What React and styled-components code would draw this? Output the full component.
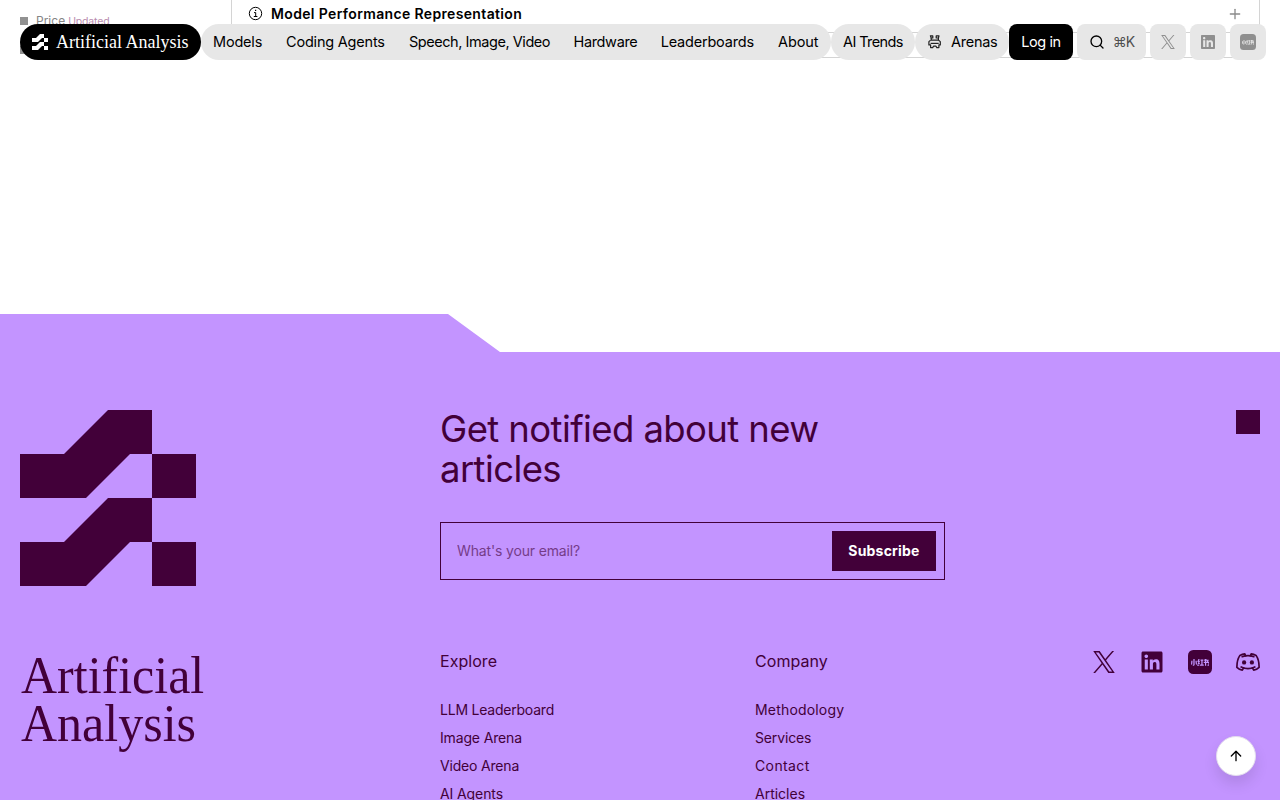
import React from 'react'
import styled, { createGlobalStyle } from 'styled-components'
import { FaLinkedin } from 'react-icons/fa'
import { SiXiaohongshu } from 'react-icons/si'
import { FiSearch, FiArrowUp, FiPlus } from 'react-icons/fi'

const INK = '#420039'
const LILAC = '#c394ff'

const GlobalStyle = createGlobalStyle`
  *, *::before, *::after {
    box-sizing: border-box;
  }
  html, body {
    margin: 0;
    overflow: hidden;
  }
  body {
    background: #fff;
    color: #000;
    font-family: Inter, "Liberation Sans", sans-serif;
    font-size: 15px;
  }
  svg {
    display: block;
    flex: none;
  }
`

const Page = styled.div`
  position: relative;
  height: 800px;
  overflow: hidden;
  display: flex;
  flex-direction: column;
`

const Content = styled.main`
  display: flex;
  flex: none;
  height: 314px;
  padding: 0 20px;
`

const Contents = styled.aside`
  width: 211px;
  padding-top: 12px;
`

const ContentsItem = styled.div`
  display: flex;
  align-items: center;
  height: 18px;
  margin-bottom: 11px;
  font-size: 12px;
  line-height: 16px;
  color: #858585;
`

const Bullet = styled.span`
  width: 8px;
  height: 8px;
  margin-right: 8px;
  background: #919191;
`

const Updated = styled.span`
  margin: 1px 0 0 3px;
  font-size: 10.5px;
  letter-spacing: -0.15px;
  color: #b98caf;
`

const Accordion = styled.div`
  width: 1029px;
  height: 58px;
  border: 1px solid #d4d4d4;
  border-top: none;
`

const AccordionHeader = styled.div`
  display: flex;
  align-items: center;
  height: 33px;
  padding: 0 16px 5px 16px;
  border-bottom: 1px solid #d4d4d4;
  color: #8a8a8a;
`

const AccordionTitle = styled.span`
  flex: 1;
  margin-left: 8px;
  font-size: 14px;
  font-weight: 600;
  letter-spacing: 0.35px;
  color: #000;
`

const Header = styled.header`
  position: absolute;
  top: 24px;
  left: 20px;
  display: flex;
  height: 36px;
`

const Brand = styled.div`
  display: flex;
  align-items: center;
  width: 181px;
  padding-left: 12px;
  gap: 8px;
  border-radius: 18px;
  background: #000;
  color: #fff;
  font-family: "Liberation Serif", serif;
  font-size: 18px;
  white-space: nowrap;
`

const NavGroup = styled.nav`
  display: flex;
  border-radius: 18px;
  background: #e7e7e7;
`

const NavItem = styled.span`
  display: flex;
  align-items: center;
  width: ${props => props.$w}px;
  padding: 0 0 2px 12px;
  gap: 9px;
  font-size: 14.5px;
  letter-spacing: ${props => props.$ls || 0}px;
  white-space: nowrap;
`

const Login = styled.button`
  width: 64px;
  padding: 0 0 2px;
  border: none;
  border-radius: 8px;
  background: #000;
  color: #fff;
  font: inherit;
  font-size: 14.5px;
  letter-spacing: -0.4px;
`

const Tool = styled.div`
  display: flex;
  align-items: center;
  justify-content: center;
  gap: 8px;
  width: ${props => props.$w || 36}px;
  margin-left: 4px;
  border-radius: 8px;
  background: #e7e7e7;
  color: #8f8f8f;
`

const Shortcut = styled.span`
  padding-bottom: 1px;
  font-size: 14px;
  letter-spacing: -1px;
  color: #505050;
`

const Footer = styled.footer`
  flex: none;
  height: 486px;
  padding: 96px 20px 0;
  background: ${LILAC};
  color: ${INK};
  clip-path: polygon(0 0, 448px 0, 500px 38px, 100% 38px, 100% 100%, 0 100%);
`

const FooterTop = styled.div`
  display: flex;
  align-items: flex-start;
  height: 240px;
`

const LogoCell = styled.div`
  width: 420px;
`

const Signup = styled.form`
  flex: 1;
  margin-top: -1px;
`

const Heading = styled.h2`
  width: 420px;
  margin: 0 0 33px;
  font-size: 36.5px;
  font-weight: 400;
  line-height: 40px;
  letter-spacing: -0.6px;
`

const EmailRow = styled.div`
  display: flex;
  width: 505px;
  height: 58px;
  padding: 8px 8px 8px 16px;
  border: 1px solid ${INK};
`

const EmailInput = styled.input`
  flex: 1;
  min-width: 0;
  padding: 0 0 2px;
  border: none;
  outline: none;
  background: transparent;
  font-family: inherit;
  font-size: 14px;
  letter-spacing: -0.15px;
  &::placeholder {
    color: ${INK};
    opacity: 0.6;
  }
`

const SubscribeButton = styled.button`
  width: 104px;
  padding: 0 0 2px;
  border: none;
  background: ${INK};
  color: #fff;
  font-family: inherit;
  font-size: 14px;
  font-weight: 700;
  letter-spacing: 0.2px;
`

const Square = styled.div`
  width: 24px;
  height: 24px;
  background: ${INK};
`

const FooterBottom = styled.div`
  display: flex;
  align-items: flex-start;
`

const Wordmark = styled.div`
  width: 420px;
  padding: 1px 0 0 1px;
  font-family: "Liberation Serif", serif;
  font-size: 50px;
  line-height: 48px;
`

const WordmarkLine = styled.div`
  height: 48px;
  transform: scaleY(1.07);
`

const LinkColumn = styled.div`
  display: flex;
  flex-direction: column;
  width: 315px;
`

const ColumnTitle = styled.div`
  height: 24px;
  margin: -1px 0 23px;
  font-size: 16px;
  line-height: 24px;
  letter-spacing: 0.05px;
`

const FooterLink = styled.a`
  height: 28px;
  font-size: 14px;
  line-height: 28px;
  letter-spacing: ${props => props.$ls || 0}px;
`

const Socials = styled.div`
  display: flex;
  flex: 1;
  justify-content: flex-end;
  gap: 24px;
`

const SocialLink = styled.a`
  display: flex;
  align-items: center;
  justify-content: center;
  width: 24px;
  height: 24px;
`

const RedNoteTile = styled.span`
  display: flex;
  align-items: center;
  justify-content: center;
  width: ${props => props.$size}px;
  height: ${props => props.$size}px;
  border-radius: ${props => props.$size * 0.22}px;
  background: ${props => props.$bg};
  color: ${props => props.$fg};
`

const ScrollTop = styled.button`
  position: absolute;
  right: 24px;
  bottom: 24px;
  display: flex;
  align-items: center;
  justify-content: center;
  width: 40px;
  height: 40px;
  padding: 0;
  border: 1px solid #e3dcee;
  border-radius: 50%;
  background: #fff;
  box-shadow: 0 8px 14px rgba(0, 0, 0, 0.1);
`

const LogoMark = ({ size }) => (
  <svg width={size} height={size} viewBox="0 0 176 176" fill="currentColor">
    <path d="M0 44H44L88 0H132V44H110L66 88H0Z" />
    <path d="M132 44H176V88H132Z" />
    <path d="M0 132H44L88 88H132V132H110L66 176H0Z" />
    <path d="M132 132H176V176H132Z" />
  </svg>
)

const XLogo = ({ size }) => (
  <svg width={size} height={size} viewBox="0 0 1200 1227" fill="currentColor">
    <path d="M714.163 519.284L1160.89 0H1055.03L667.137 450.887L357.328 0H0L468.492 681.821L0 1226.37H105.866L515.491 750.218L842.672 1226.37H1200L714.137 519.284H714.163ZM569.165 687.828L521.697 619.934L144.011 79.6944H306.615L611.412 515.685L658.88 583.579L1055.08 1150.3H892.476L569.165 687.854V687.828Z" />
  </svg>
)

const RedNote = ({ size, bg, fg }) => (
  <RedNoteTile $size={size} $bg={bg} $fg={fg}>
    <SiXiaohongshu size={size * 0.78} />
  </RedNoteTile>
)

const DiscordLogo = () => (
  <svg width="24" height="24" viewBox="0 0 24 24" fill="none" stroke="currentColor" strokeWidth="1.7" strokeLinecap="round" strokeLinejoin="round">
    <path d="M9.6 5.8L8.8 3.8C7.2 4 5.4 4.6 3.9 5.4C1.8 8.6 0.8 12.8 0.9 17.4C2.5 18.9 4.3 19.8 6.3 20.2L7.6 17.8" />
    <path d="M14.4 5.8L15.2 3.8C16.8 4 18.6 4.6 20.1 5.4C22.2 8.6 23.2 12.8 23.1 17.4C21.5 18.9 19.7 19.8 17.7 20.2L16.4 17.8" />
    <path d="M6.2 6.6C9.6 5.4 14.4 5.4 17.8 6.6" />
    <path d="M5.2 17C9.2 18.9 14.8 18.9 18.8 17" />
    <ellipse cx="8.1" cy="12.4" rx="2.1" ry="2.2" fill="currentColor" stroke="none" />
    <ellipse cx="15.9" cy="12.4" rx="2.1" ry="2.2" fill="currentColor" stroke="none" />
  </svg>
)

const InfoIcon = () => (
  <svg width="15" height="15" viewBox="0 0 15 15" fill="none" stroke="#000" strokeWidth="1">
    <circle cx="7.5" cy="7.5" r="6.2" />
    <path d="M6 6.6H7.7V10.3M5.8 10.5H9.4" />
    <path d="M7 4.4H8.2" strokeWidth="1.2" />
  </svg>
)

const ArenaIcon = () => (
  <svg width="15" height="15" viewBox="0 0 15 15" fill="none" stroke="#222" strokeWidth="1.2" strokeLinejoin="round">
    <path d="M3.4 1.9H5.8V4H4.2Z" />
    <path d="M9.2 1.9H12L11.4 4H9.2Z" />
    <path d="M4.2 4V6.2H11.4V4" />
    <path d="M3.6 6.2L1.9 7.6V10.9H3.6V13.6H5.7L6.5 12.2H9L9.8 13.6H11.9V10.9H13.3V7.6L11.6 6.2" />
    <path d="M3.6 9.4H11.7" />
  </svg>
)

const navItems = [
  { label: 'Models', w: 73, ls: -0.2 },
  { label: 'Coding Agents', w: 123, ls: -0.2 },
  { label: 'Speech, Image, Video', w: 164.5, ls: -0.45 },
  { label: 'Hardware', w: 87.2, ls: -0.35 },
  { label: 'Leaderboards', w: 117.3, ls: -0.2 },
  { label: 'About', w: 65, ls: -0.1 },
]

const explore = [
  { label: 'LLM Leaderboard', ls: -0.22 },
  { label: 'Image Arena', ls: -0.15 },
  { label: 'Video Arena', ls: -0.18 },
  { label: 'AI Agents', ls: -0.1 },
]

const company = [
  { label: 'Methodology', ls: 0.18 },
  { label: 'Services', ls: -0.15 },
  { label: 'Contact', ls: 0.38 },
  { label: 'Articles', ls: 0 },
]

const App = () => {
  return (
    <Page>
      <GlobalStyle />

      <Content>
        <Contents>
          <ContentsItem><Bullet />Price<Updated>Updated</Updated></ContentsItem>
          <ContentsItem><Bullet /></ContentsItem>
        </Contents>
        <Accordion>
          <AccordionHeader>
            <InfoIcon />
            <AccordionTitle>Model Performance Representation</AccordionTitle>
            <FiPlus size={16} />
          </AccordionHeader>
        </Accordion>
      </Content>

      <Footer>
        <FooterTop>
          <LogoCell><LogoMark size={176} /></LogoCell>
          <Signup>
            <Heading>Get notified about new articles</Heading>
            <EmailRow>
              <EmailInput placeholder="What's your email?" />
              <SubscribeButton type="button">Subscribe</SubscribeButton>
            </EmailRow>
          </Signup>
          <Square />
        </FooterTop>
        <FooterBottom>
          <Wordmark>
            <WordmarkLine>Artificial</WordmarkLine>
            <WordmarkLine>Analysis</WordmarkLine>
          </Wordmark>
          <LinkColumn>
            <ColumnTitle>Explore</ColumnTitle>
            {explore.map(l => <FooterLink key={l.label} $ls={l.ls}>{l.label}</FooterLink>)}
          </LinkColumn>
          <LinkColumn>
            <ColumnTitle>Company</ColumnTitle>
            {company.map(l => <FooterLink key={l.label} $ls={l.ls}>{l.label}</FooterLink>)}
          </LinkColumn>
          <Socials>
            <SocialLink><XLogo size={22} /></SocialLink>
            <SocialLink><FaLinkedin size={24} /></SocialLink>
            <SocialLink><RedNote size={24} bg={INK} fg={LILAC} /></SocialLink>
            <SocialLink><DiscordLogo /></SocialLink>
          </Socials>
        </FooterBottom>
      </Footer>

      <Header>
        <Brand><LogoMark size={16} />Artificial Analysis</Brand>
        <NavGroup>
          {navItems.map(n => <NavItem key={n.label} $w={n.w} $ls={n.ls}>{n.label}</NavItem>)}
        </NavGroup>
        <NavGroup><NavItem $w={84} $ls={-0.6}>AI Trends</NavItem></NavGroup>
        <NavGroup><NavItem $w={94} $ls={-0.25}><ArenaIcon />Arenas</NavItem></NavGroup>
        <Login>Log in</Login>
        <Tool $w={69}>
          <FiSearch size={16} color="#000" />
          <Shortcut>⌘K</Shortcut>
        </Tool>
        <Tool><XLogo size={14} /></Tool>
        <Tool><FaLinkedin size={16} /></Tool>
        <Tool><RedNote size={16} bg="#8f8f8f" fg="#e7e7e7" /></Tool>
      </Header>

      <ScrollTop><FiArrowUp size={16} color="#000" /></ScrollTop>
    </Page>
  )
}

export default App
